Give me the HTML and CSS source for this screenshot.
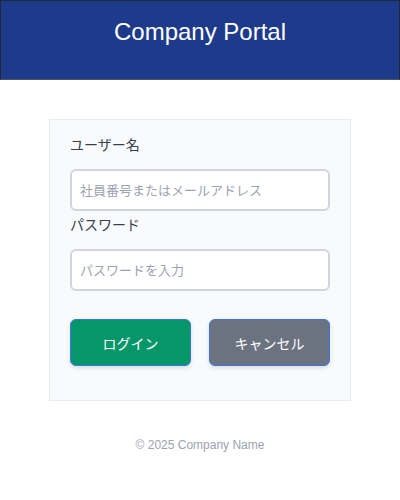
FILE: index.html
```html
<!DOCTYPE html>
<html lang="ja">
<head>
<meta charset="utf-8">
<title>Company Portal</title>
<link rel="stylesheet" href="styles.css">
</head>
<body>
<header class="header">
  <h1 class="title">Company Portal</h1>
</header>
<main class="main">
  <form class="card">
    <label class="label" for="user">ユーザー名</label>
    <input class="input" id="user" type="text" placeholder="社員番号またはメールアドレス">
    <label class="label" for="pass">パスワード</label>
    <input class="input" id="pass" type="password" placeholder="パスワードを入力">
    <div class="actions">
      <button type="button" class="btn btn-login">ログイン</button>
      <button type="button" class="btn btn-cancel">キャンセル</button>
    </div>
  </form>
</main>
<footer class="footer">© 2025 Company Name</footer>
</body>
</html>
```
FILE: styles.css
```css
* { box-sizing: border-box; }
body {
  margin: 0;
  background: #ffffff;
  font-family: "Liberation Sans", "Noto Sans CJK JP", sans-serif;
}
.header {
  height: 80px;
  background: #1e3a8a;
  border: 1px solid #1e293b;
  border-bottom-color: #4b5563;
  padding-top: 17px;
  text-align: center;
}
.title {
  margin: 0;
  color: #ffffff;
  font-size: 24px;
  font-weight: normal;
  line-height: 28px;
}
.main {
  display: flex;
  justify-content: center;
  padding-top: 39px;
}
.card {
  width: 302px;
  background: #f9fafb;
  border: 1px solid #e9ebef;
  padding: 15px 20px 34px;
  display: flex;
  flex-direction: column;
}
.label {
  display: block;
  font-size: 14px;
  line-height: 20px;
  color: #374151;
  margin-bottom: 14px;
}
.input {
  display: block;
  width: 100%;
  height: 42px;
  border: 2px solid #d1d5db;
  border-radius: 6px;
  background: #ffffff;
  padding: 0 8px;
  font-family: "Liberation Sans", "Noto Sans CJK JP", sans-serif;
  font-size: 13px;
  color: #374151;
  margin: 0 0 4px;
  outline: none;
}
.input::placeholder { color: #9ca3af; }
.actions {
  display: flex;
  gap: 18px;
  margin-top: 24px;
}
.btn {
  flex: 1;
  height: 47px;
  border: 1px solid #3b74e6;
  border-radius: 6px;
  color: #ffffff;
  font-family: "Liberation Sans", "Noto Sans CJK JP", sans-serif;
  font-size: 14px;
  box-shadow: 0 2px 4px rgba(0, 0, 0, 0.12);
  cursor: pointer;
}
.btn-login { background: #059669; }
.btn-cancel { background: #6b7280; }
.footer {
  text-align: center;
  font-size: 12px;
  line-height: 16px;
  color: #9ca3af;
  margin-top: 36px;
}
```
